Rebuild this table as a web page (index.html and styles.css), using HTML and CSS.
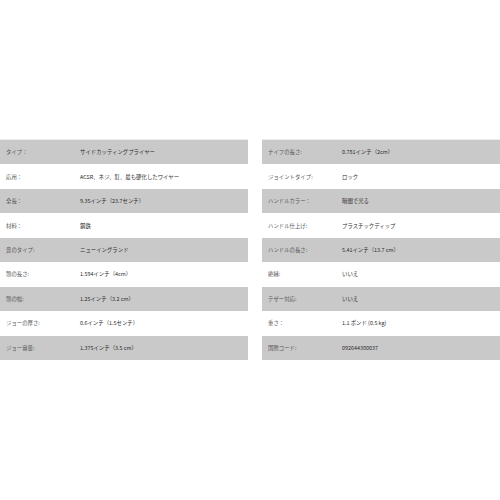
FILE: index.html
```html
<!DOCTYPE html>
<html lang="ja">
<head>
<meta charset="utf-8">
<link rel="stylesheet" href="styles.css">
</head>
<body>
<div class="specs">
  <div class="table table-left">
    <div class="row alt"><span class="label">タイプ：</span><span class="value">サイドカッティングプライヤー</span></div>
    <div class="row"><span class="label">応用：</span><span class="value">ACSR、ネジ、釘、最も硬化したワイヤー</span></div>
    <div class="row alt"><span class="label">全長：</span><span class="value">9.35インチ（23.7センチ）</span></div>
    <div class="row"><span class="label">材料：</span><span class="value">鋼鉄</span></div>
    <div class="row alt"><span class="label">鼻のタイプ:</span><span class="value">ニューイングランド</span></div>
    <div class="row"><span class="label">顎の長さ:</span><span class="value">1.594インチ（4cm）</span></div>
    <div class="row alt"><span class="label">顎の幅:</span><span class="value">1.25インチ（3.2 cm）</span></div>
    <div class="row"><span class="label">ジョーの厚さ:</span><span class="value">0.6インチ（1.5センチ）</span></div>
    <div class="row alt"><span class="label">ジョー容量:</span><span class="value">1.375インチ（3.5 cm）</span></div>
  </div>
  <div class="table table-right">
    <div class="row alt"><span class="label">ナイフの長さ:</span><span class="value">0.781インチ（2cm）</span></div>
    <div class="row"><span class="label">ジョイントタイプ:</span><span class="value">ロック</span></div>
    <div class="row alt"><span class="label">ハンドルカラー：</span><span class="value">暗闇で光る</span></div>
    <div class="row"><span class="label">ハンドル仕上げ:</span><span class="value">プラスチックディップ</span></div>
    <div class="row alt"><span class="label">ハンドルの長さ:</span><span class="value">5.41インチ（13.7 cm）</span></div>
    <div class="row"><span class="label">絶縁:</span><span class="value">いいえ</span></div>
    <div class="row alt"><span class="label">テザー対応:</span><span class="value">いいえ</span></div>
    <div class="row"><span class="label">重さ：</span><span class="value">1.1 ポンド (0.5 kg)</span></div>
    <div class="row alt"><span class="label">国際コード:</span><span class="value">092644380037</span></div>
  </div>
</div>
</body>
</html>
```
FILE: styles.css
```css
html, body {
  margin: 0;
  padding: 0;
  background: #ffffff;
}
body {
  font-family: "Noto Sans CJK JP", "Noto Sans", sans-serif;
  font-size: 5.4px;
  width: 500px;
  height: 500px;
}
.specs {
  display: flex;
  gap: 14px;
  padding-top: 139px;
}
.table {
  display: grid;
  grid-template-rows: repeat(9, 1fr);
  height: 220px;
  border-top: 1px solid #ececec;
}
.table-left {
  width: 248px;
}
.table-right {
  width: 238px;
}
.row {
  display: flex;
  align-items: center;
  padding-left: 6px;
}
.row.alt {
  background: #c9c9c9;
}
.label {
  width: 74px;
  flex: none;
  color: #585858;
}
.value {
  color: #2e2e2e;
}
```
